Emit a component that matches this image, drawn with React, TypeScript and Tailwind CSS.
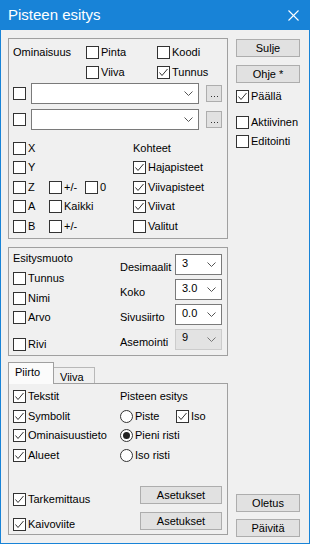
import React from 'react';

const font = { fontFamily: '"Liberation Sans", Arial, sans-serif' };

function Check({ checked }: { checked?: boolean }) {
  return (
    <span className="w-[13px] h-[13px] shrink-0 border border-[#333333] bg-white flex items-center justify-center">
      {checked && (
        <svg width="11" height="11" viewBox="0 0 11 11">
          <polyline points="1.5,5.5 4,8.5 9.5,2" fill="none" stroke="#333333" strokeWidth="1" />
        </svg>
      )}
    </span>
  );
}

function Cb({ label, checked, className = '' }: { label?: string; checked?: boolean; className?: string }) {
  return (
    <div className={`flex items-center h-[13px] ${className}`}>
      <Check checked={checked} />
      {label && <span className="ml-[2px] leading-[13px] whitespace-nowrap">{label}</span>}
    </div>
  );
}

function Radio({ label, checked }: { label: string; checked?: boolean }) {
  return (
    <div className="flex items-center h-[13px]">
      <span className="w-[13px] h-[13px] shrink-0 rounded-full border border-[#333333] bg-white flex items-center justify-center">
        {checked && <span className="w-[7px] h-[7px] rounded-full bg-[#222222]" />}
      </span>
      <span className="ml-[2px] leading-[13px] whitespace-nowrap">{label}</span>
    </div>
  );
}

function Chevron({ color = '#555555' }: { color?: string }) {
  return (
    <svg width="9" height="5" viewBox="0 0 9 5">
      <polyline points="0.5,0.5 4.5,4.5 8.5,0.5" fill="none" stroke={color} strokeWidth="1" />
    </svg>
  );
}

function Combo({ value, className = '', disabled }: { value?: string; className?: string; disabled?: boolean }) {
  return (
    <div
      className={`h-[21px] flex items-center justify-between pl-[6px] pr-[5px] border ${
        disabled ? 'bg-[#e3e3e3] border-[#cccccc]' : 'bg-white border-[#7a7a7a]'
      } ${className}`}
    >
      <span className={disabled ? 'leading-[13px] -mt-[4px] text-black' : 'leading-[13px] -mt-[2px]'}>{value}</span>
      <Chevron color={disabled ? '#777777' : '#555555'} />
    </div>
  );
}

function Btn({ label, className = '' }: { label: string; className?: string }) {
  return (
    <div className={`h-[18px] flex items-center justify-center bg-[#e1e1e1] border border-[#adadad] leading-[13px] ${className}`}>
      {label}
    </div>
  );
}

function DotsBtn() {
  return (
    <div className="ml-[7px] w-[16px] h-[17px] bg-[#e1e1e1] border border-[#adadad] flex items-end justify-center gap-[2px] pb-[4px]">
      <span className="w-[1px] h-[1px] bg-[#333333]" />
      <span className="w-[1px] h-[1px] bg-[#333333]" />
      <span className="w-[1px] h-[1px] bg-[#333333]" />
    </div>
  );
}

export default function App() {
  return (
    <div className="w-[310px] h-[544px] bg-[#1883d7] flex flex-col px-[1px] pb-[1px] text-[11px] text-black" style={font}>
      <div className="h-[30px] shrink-0 flex items-center justify-between pl-[7px] pr-[10px] text-white">
        <span className="text-[15px] leading-[18px]">Pisteen esitys</span>
        <svg width="11" height="11" viewBox="0 0 11 11">
          <line x1="0.5" y1="0.5" x2="10.5" y2="10.5" stroke="white" strokeWidth="1.1" />
          <line x1="10.5" y1="0.5" x2="0.5" y2="10.5" stroke="white" strokeWidth="1.1" />
        </svg>
      </div>

      <div className="flex-1 bg-[#f0f0f0] flex pl-[7px] pr-[9px]">
        {/* left column */}
        <div className="w-[220px] flex flex-col pt-[8px]">
          {/* Ominaisuus group */}
          <div className="h-[201px] border border-[#a0a0a0] pl-[4px] flex flex-col">
            <div className="flex items-center h-[13px] mt-[7px]">
              <span className="w-[73px] leading-[13px]">Ominaisuus</span>
              <Cb label="Pinta" className="w-[71px]" />
              <Cb label="Koodi" />
            </div>
            <div className="flex items-center h-[13px] mt-[7px]">
              <span className="w-[73px]" />
              <Cb label="Viiva" className="w-[71px]" />
              <Cb label="Tunnus" checked />
            </div>
            <div className="flex items-center h-[21px] mt-[4px]">
              <Check />
              <Combo className="ml-[5px] w-[168px]" />
              <DotsBtn />
            </div>
            <div className="flex items-center h-[21px] mt-[5px]">
              <Check />
              <Combo className="ml-[5px] w-[168px]" />
              <DotsBtn />
            </div>
            <div className="flex items-center h-[13px] mt-[12px]">
              <Cb label="X" className="w-[120px]" />
              <span className="leading-[13px]">Kohteet</span>
            </div>
            <div className="flex items-center h-[13px] mt-[6px]">
              <Cb label="Y" className="w-[120px]" />
              <Cb label="Hajapisteet" checked />
            </div>
            <div className="flex items-center h-[13px] mt-[7px]">
              <Cb label="Z" className="w-[36px]" />
              <Cb label="+/-" className="w-[36px]" />
              <Cb label="0" className="w-[48px]" />
              <Cb label="Viivapisteet" checked />
            </div>
            <div className="flex items-center h-[13px] mt-[6px]">
              <Cb label="A" className="w-[36px]" />
              <Cb label="Kaikki" className="w-[84px]" />
              <Cb label="Viivat" checked />
            </div>
            <div className="flex items-center h-[13px] mt-[7px]">
              <Cb label="B" className="w-[36px]" />
              <Cb label="+/-" className="w-[84px]" />
              <Cb label="Valitut" />
            </div>
          </div>

          {/* Esitysmuoto group */}
          <div className="h-[109px] mt-[8px] border border-[#a0a0a0] pl-[4px] flex">
            <div className="w-[107px] flex flex-col">
              <span className="leading-[13px] mt-[4px]">Esitysmuoto</span>
              <Cb label="Tunnus" className="mt-[7px]" />
              <Cb label="Nimi" className="mt-[7px]" />
              <Cb label="Arvo" className="mt-[6px]" />
              <Cb label="Rivi" className="mt-[14px]" />
            </div>
            <div className="flex flex-col gap-[4px] pt-[6px]">
              {[
                { label: 'Desimaalit', value: '3' },
                { label: 'Koko', value: '3.0' },
                { label: 'Sivusiirto', value: '0.0' },
                { label: 'Asemointi', value: '9', disabled: true },
              ].map((row) => (
                <div key={row.label} className="flex items-start">
                  <span className="w-[55px] leading-[13px] mt-[7px]">{row.label}</span>
                  <Combo value={row.value} disabled={row.disabled} className="w-[47px]" />
                </div>
              ))}
            </div>
          </div>

          {/* tabs */}
          <div className="flex items-end mt-[6px] h-[22px]">
            <div className="w-[46px] h-[22px] border border-b-0 border-[#a0a0a0] bg-[#fbfbfb] flex items-start pl-[6px] pt-[3px] leading-[13px] relative z-10">
              Piirto
            </div>
            <div className="w-[41px] h-[17px] border border-l-0 border-b-0 border-[#b8b8b8] flex items-start pl-[6px] pt-[3px] leading-[13px]">
              Viiva
            </div>
          </div>
          <div className="h-[152px] -mt-[1px] border border-[#a0a0a0] pl-[4px] flex flex-col">
            <div className="flex mt-[6px]">
              <div className="w-[107px] flex flex-col">
                <Cb label="Tekstit" checked />
                <Cb label="Symbolit" checked className="mt-[7px]" />
                <Cb label="Ominaisuustieto" checked className="mt-[6px]" />
                <Cb label="Alueet" checked className="mt-[7px]" />
              </div>
              <div className="flex flex-col">
                <span className="leading-[13px] h-[13px]">Pisteen esitys</span>
                <div className="flex items-center mt-[7px]">
                  <div className="w-[56px]">
                    <Radio label="Piste" />
                  </div>
                  <Cb label="Iso" checked />
                </div>
                <div className="mt-[6px]">
                  <Radio label="Pieni risti" checked />
                </div>
                <div className="mt-[7px]">
                  <Radio label="Iso risti" />
                </div>
              </div>
            </div>
            <div className="flex items-start mt-[24px]">
              <Cb label="Tarkemittaus" checked className="w-[127px] mt-[7px]" />
              <Btn label="Asetukset" className="w-[82px]" />
            </div>
            <div className="flex items-start mt-[6px]">
              <Cb label="Kaivoviite" checked className="w-[127px] mt-[6px]" />
              <Btn label="Asetukset" className="w-[82px]" />
            </div>
          </div>
        </div>

        {/* right column */}
        <div className="w-[64px] ml-[8px] flex flex-col pt-[9px] pb-[6px]">
          <Btn label="Sulje" />
          <Btn label="Ohje *" className="mt-[8px]" />
          <Cb label="Päällä" checked className="mt-[7px]" />
          <Cb label="Aktiivinen" className="mt-[13px]" />
          <Cb label="Editointi" className="mt-[6px]" />
          <Btn label="Oletus" className="mt-auto" />
          <Btn label="Päivitä" className="mt-[7px]" />
        </div>
      </div>
    </div>
  );
}
